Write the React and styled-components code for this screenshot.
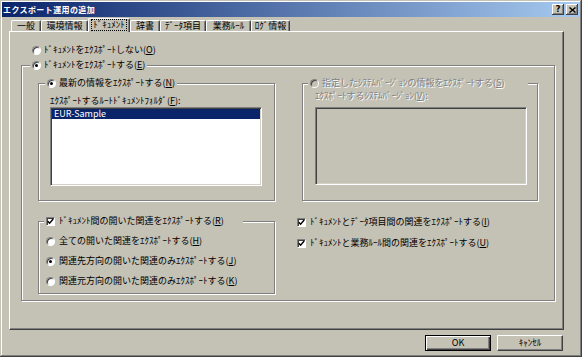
import React from "react"
import styled, { createGlobalStyle } from "styled-components"

const face = "#c4c1b5"
const shadow = "#808080"
const dark = "#404040"

const GlobalStyle = createGlobalStyle`
  html, body { margin: 0; padding: 0; background: #fff; }
  body {
    font-family: "Noto Sans CJK JP", "DejaVu Sans", sans-serif;
    font-size: 9px;
    color: #000;
  }
`

const Window = styled.div`
  width: 582px;
  height: 357px;
  box-sizing: border-box;
  padding: 2px;
  background: ${face};
  box-shadow: inset -1px -1px 0 ${dark}, inset 1px 1px 0 ${face},
    inset -2px -2px 0 ${shadow}, inset 2px 2px 0 #fff;
  display: flex;
  flex-direction: column;
`

const TitleBar = styled.div`
  height: 15px;
  flex: none;
  display: flex;
  align-items: center;
  justify-content: space-between;
  padding: 0 2px 0 1px;
  background: linear-gradient(to right, #0a246a, #a6caf0);
`

const Title = styled.span`
  color: #fff;
  font-weight: bold;
  font-size: 8px;
  letter-spacing: 0.4px;
  line-height: 15px;
  white-space: nowrap;
`

const CapButtons = styled.div`
  display: flex;
  gap: 2px;
`

const CapButton = styled.span`
  width: 12px;
  height: 11px;
  box-sizing: border-box;
  background: ${face};
  box-shadow: inset -1px -1px 0 ${dark}, inset 1px 1px 0 #fff,
    inset -2px -2px 0 ${shadow};
  display: flex;
  align-items: center;
  justify-content: center;
  font: bold 8px "DejaVu Sans", sans-serif;
  line-height: 11px;
`

const Body = styled.div`
  flex: 1;
  display: flex;
  flex-direction: column;
  padding: 1px 16px 0 7px;
`

const TabRow = styled.div`
  height: 13px;
  display: flex;
  align-items: flex-end;
  padding-left: 2px;
`

const Tab = styled.div`
  width: ${p => p.$w}px;
  height: ${p => (p.$active ? 14 : 11)}px;
  margin-bottom: ${p => (p.$active ? -1 : 0)}px;
  box-sizing: border-box;
  flex: none;
  background: ${face};
  border-top: 1px solid #fff;
  border-left: 1px solid #fff;
  border-right: 1px solid ${dark};
  border-radius: 2px 2px 0 0;
  box-shadow: inset -1px 0 0 ${shadow};
  display: flex;
  align-items: ${p => (p.$active ? "flex-start" : "center")};
  padding-top: ${p => (p.$active ? 1 : 0)}px;
  justify-content: center;
  white-space: nowrap;
  line-height: 10px;
  ${p => p.$active && "position: relative; z-index: 1;"}
`

const Focus = styled.span`
  outline: 1px dotted #000;
  outline-offset: 0;
  padding: 0 1px;
`

const Panel = styled.div`
  width: 555px;
  height: 299px;
  box-sizing: border-box;
  flex: none;
  border-top: 1px solid #fff;
  border-left: 1px solid #fff;
  border-right: 1px solid ${dark};
  border-bottom: 1px solid ${dark};
  box-shadow: inset -1px -1px 0 ${shadow};
  display: flex;
  flex-direction: column;
`

const Option = styled.div`
  display: flex;
  align-items: center;
  gap: ${p => (p.$gap ? p.$gap : 3)}px;
  height: 12px;
  line-height: 12px;
  white-space: nowrap;
  margin: ${p => p.$m || "0"};
  color: ${p => (p.$disabled ? shadow : "#000")};
  text-shadow: ${p => (p.$disabled ? "1px 1px 0 #fff" : "none")};
`

const Group = styled.div`
  width: ${p => p.$w}px;
  height: ${p => p.$h}px;
  box-sizing: border-box;
  flex: none;
  border: 1px solid ${shadow};
  box-shadow: inset 1px 1px 0 #fff, 1px 1px 0 #fff;
  display: flex;
  flex-direction: column;
  align-items: flex-start;
  margin: ${p => p.$m || "0"};
`

const Caption = styled(Option)`
  margin: -7px 0 0 ${p => p.$left}px;
  padding: 0 2px;
  background: ${face};
  width: ${p => (p.$w ? `${p.$w}px` : "auto")};
  box-sizing: border-box;
`

const Row = styled.div`
  display: flex;
  align-items: flex-start;
  gap: ${p => p.$gap || 0}px;
  margin: ${p => p.$m || "0"};
`

const Column = styled.div`
  display: flex;
  flex-direction: column;
  gap: ${p => p.$gap || 0}px;
  margin: ${p => p.$m || "0"};
`

const FieldLabel = styled.div`
  height: 12px;
  line-height: 12px;
  white-space: nowrap;
  margin: ${p => p.$m};
  color: ${p => (p.$disabled ? shadow : "#000")};
  text-shadow: ${p => (p.$disabled ? "1px 1px 0 #fff" : "none")};
`

const ListBox = styled.div`
  width: 212px;
  height: ${p => p.$h}px;
  box-sizing: border-box;
  margin: ${p => p.$m};
  padding: 1px;
  background: ${p => (p.$disabled ? face : "#fff")};
  border: 1px solid;
  border-color: ${shadow} #fff #fff ${shadow};
  box-shadow: inset 1px 1px 0 ${dark}, inset -1px -1px 0 #d4d0c8;
`

const ListItem = styled.div`
  height: 10px;
  line-height: 10px;
  padding-left: 2px;
  background: ${p => (p.$selected ? "#0a246a" : "transparent")};
  color: ${p => (p.$selected ? "#fff" : "#000")};
`

const RadioMark = styled.span`
  width: 9px;
  height: 9px;
  flex: none;
  box-sizing: border-box;
  border-radius: 50%;
  border: 1px solid;
  border-color: ${shadow} #fff #fff ${shadow};
  box-shadow: inset 1px 1px 0 ${dark};
  background: ${p => (p.$disabled ? face : "#fff")};
  display: flex;
  align-items: center;
  justify-content: center;
  &::after {
    content: "";
    display: ${p => (p.$checked ? "block" : "none")};
    width: 3px;
    height: 3px;
    border-radius: 50%;
    background: #000;
  }
`

const CheckMark = styled.span`
  width: 9px;
  height: 9px;
  flex: none;
  box-sizing: border-box;
  border: 1px solid;
  border-color: ${shadow} #fff #fff ${shadow};
  box-shadow: inset 1px 1px 0 ${dark};
  background: #fff;
  display: flex;
  align-items: center;
  justify-content: center;
`

const ButtonRow = styled.div`
  display: flex;
  justify-content: flex-end;
  gap: 6px;
  margin: 5px 1px 0 0;
`

const Button = styled.div`
  width: 66px;
  height: 16px;
  box-sizing: border-box;
  background: ${face};
  border: 1px solid;
  border-color: ${p => (p.$default ? "#000" : `#fff ${dark} ${dark} #fff`)};
  box-shadow: ${p =>
    p.$default
      ? `inset 1px 1px 0 #fff, inset -1px -1px 0 ${dark}, inset -2px -2px 0 ${shadow}`
      : `inset -1px -1px 0 ${shadow}`};
  display: flex;
  align-items: center;
  justify-content: center;
  line-height: 12px;
`

function Radio({ checked, disabled }) {
  return <RadioMark $checked={checked} $disabled={disabled} />
}

function Check() {
  return (
    <CheckMark>
      <svg width="7" height="7" viewBox="0 0 7 7">
        <path d="M0.8 3.2 L2.6 5.2 L6.2 1" fill="none" stroke="#000" strokeWidth="1.4" />
      </svg>
    </CheckMark>
  )
}

const tabs = [
  { label: "一般", w: 30 },
  { label: "環境情報", w: 47 },
  { label: "ﾄﾞｷｭﾒﾝﾄ", w: 42, active: true },
  { label: "辞書", w: 30 },
  { label: "ﾃﾞｰﾀ項目", w: 46 },
  { label: "業務ﾙｰﾙ", w: 45 },
  { label: "ﾛｸﾞ情報", w: 39 },
]

export default function App() {
  return (
    <>
      <GlobalStyle />
      <Window>
        <TitleBar>
          <Title>エクスポート運用の追加</Title>
          <CapButtons>
            <CapButton>?</CapButton>
            <CapButton>
              <svg width="7" height="6" viewBox="0 0 7 6">
                <path d="M0.5 0.5 L6.5 5.5 M6.5 0.5 L0.5 5.5" stroke="#000" strokeWidth="1.4" />
              </svg>
            </CapButton>
          </CapButtons>
        </TitleBar>
        <Body>
          <TabRow>
            {tabs.map(t => (
              <Tab key={t.label} $w={t.w} $active={t.active}>
                {t.active ? <Focus>{t.label}</Focus> : t.label}
              </Tab>
            ))}
          </TabRow>
          <Panel>
            <Option $m="12px 0 0 22px">
              <Radio />
              <span>ﾄﾞｷｭﾒﾝﾄをｴｸｽﾎﾟｰﾄしない(<u>O</u>)</span>
            </Option>

            <Group $w={534} $h={236} $m="9px 0 0 11px">
              <Caption $left={8}>
                <Radio checked />
                <span>ﾄﾞｷｭﾒﾝﾄをｴｸｽﾎﾟｰﾄする(<u>E</u>)</span>
              </Caption>

              <Row $gap={27} $m="12px 0 0 16px">
                <Group $w={237} $h={118}>
                  <Caption $left={6}>
                    <Radio checked />
                    <span>最新の情報をｴｸｽﾎﾟｰﾄする(<u>N</u>)</span>
                  </Caption>
                  <FieldLabel $m="6px 0 0 11px">
                    ｴｸｽﾎﾟｰﾄするﾙｰﾄﾄﾞｷｭﾒﾝﾄﾌｫﾙﾀﾞ(<u>F</u>):
                  </FieldLabel>
                  <ListBox $h={79} $m="0 0 0 11px">
                    <ListItem $selected>EUR-Sample</ListItem>
                  </ListBox>
                </Group>

                <Group $w={236} $h={118}>
                  <Caption $left={5} $w={220} $disabled>
                    <Radio disabled />
                    <span>指定したｼｽﾃﾑﾊﾞｰｼﾞｮﾝの情報をｴｸｽﾎﾟｰﾄする(<u>S</u>)</span>
                  </Caption>
                  <FieldLabel $m="1px 0 0 12px" $disabled>
                    ｴｸｽﾎﾟｰﾄするｼｽﾃﾑﾊﾞｰｼﾞｮﾝ(<u>V</u>):
                  </FieldLabel>
                  <ListBox $h={78} $m="5px 0 0 12px" $disabled />
                </Group>
              </Row>

              <Row $m="20px 0 0 16px">
                <Group $w={237} $h={73}>
                  <Caption $left={5} $w={199} $gap={4}>
                    <Check />
                    <span>ﾄﾞｷｭﾒﾝﾄ間の開いた関連をｴｸｽﾎﾟｰﾄする(<u>R</u>)</span>
                  </Caption>
                  <Column $gap={8} $m="8px 0 0 7px">
                    <Option $gap={4}>
                      <Radio />
                      <span>全ての開いた関連をｴｸｽﾎﾟｰﾄする(<u>H</u>)</span>
                    </Option>
                    <Option $gap={4}>
                      <Radio checked />
                      <span>関連先方向の開いた関連のみｴｸｽﾎﾟｰﾄする(<u>J</u>)</span>
                    </Option>
                    <Option $gap={4}>
                      <Radio />
                      <span>関連元方向の開いた関連のみｴｸｽﾎﾟｰﾄする(<u>K</u>)</span>
                    </Option>
                  </Column>
                </Group>

                <Column $gap={9} $m="-5px 0 0 22px">
                  <Option $gap={4}>
                    <Check />
                    <span>ﾄﾞｷｭﾒﾝﾄとﾃﾞｰﾀ項目間の関連をｴｸｽﾎﾟｰﾄする(<u>I</u>)</span>
                  </Option>
                  <Option $gap={4}>
                    <Check />
                    <span>ﾄﾞｷｭﾒﾝﾄと業務ﾙｰﾙ間の関連をｴｸｽﾎﾟｰﾄする(<u>U</u>)</span>
                  </Option>
                </Column>
              </Row>
            </Group>
          </Panel>
          <ButtonRow>
            <Button $default>OK</Button>
            <Button>ｷｬﾝｾﾙ</Button>
          </ButtonRow>
        </Body>
      </Window>
    </>
  )
}
